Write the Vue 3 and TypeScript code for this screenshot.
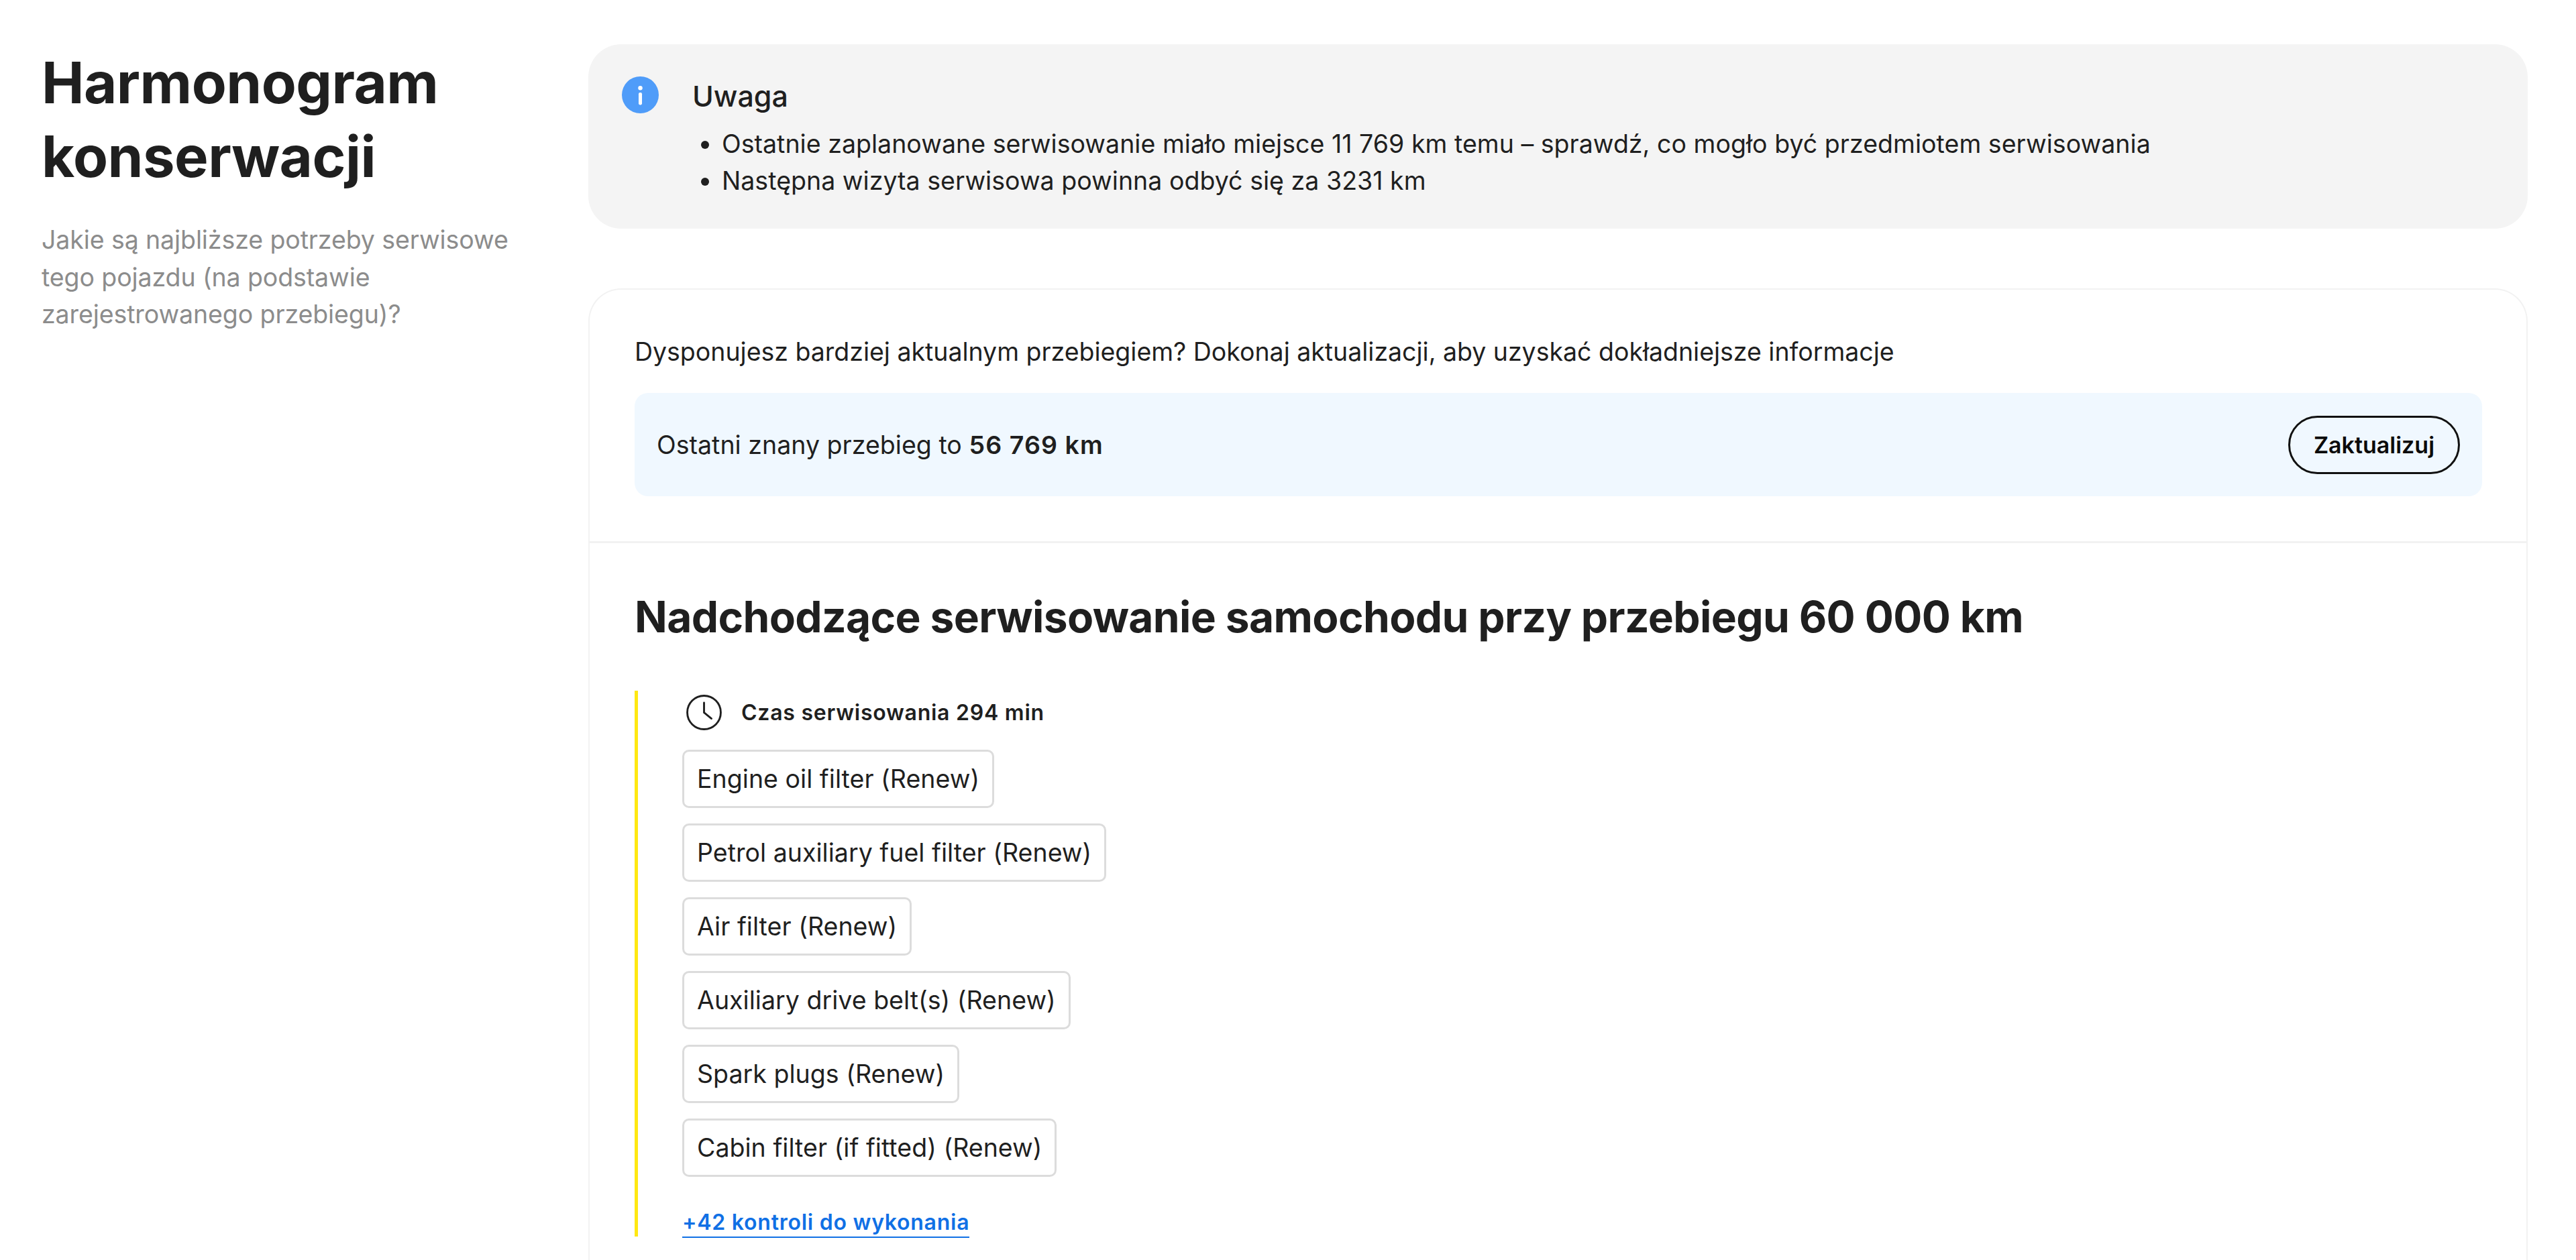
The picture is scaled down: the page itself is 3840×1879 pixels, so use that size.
<template>
  <main class="page">
    <aside class="intro">
      <h1>Harmonogram konserwacji</h1>
      <p>Jakie są najbliższe potrzeby serwisowe tego pojazdu (na podstawie zarejestrowanego przebiegu)?</p>
    </aside>

    <div class="content">
      <section class="notice">
        <svg class="info-icon" viewBox="0 0 24 24" aria-hidden="true">
          <circle cx="12" cy="12" r="12" fill="#4f9cf9" />
          <circle cx="12" cy="7.5" r="1.4" fill="#fff" />
          <rect x="10.9" y="10.5" width="2.2" height="8" rx="0.9" fill="#fff" />
        </svg>
        <div class="notice-body">
          <h2>Uwaga</h2>
          <ul>
            <li v-for="line in notes" :key="line">{{ line }}</li>
          </ul>
        </div>
      </section>

      <section class="card">
        <div class="mileage">
          <p>Dysponujesz bardziej aktualnym przebiegiem? Dokonaj aktualizacji, aby uzyskać dokładniejsze informacje</p>
          <div class="mileage-bar">
            <span>Ostatni znany przebieg to <strong>56 769 km</strong></span>
            <button type="button">Zaktualizuj</button>
          </div>
        </div>

        <div class="upcoming">
          <h2>Nadchodzące serwisowanie samochodu przy przebiegu 60 000 km</h2>
          <div class="service">
            <div class="duration">
              <svg class="clock" viewBox="0 0 24 24" aria-hidden="true">
                <circle cx="12" cy="12" r="11.3" fill="none" stroke="#1f1f1f" stroke-width="1.3" />
                <path d="M12 5.4V12l5 4.1" fill="none" stroke="#1f1f1f" stroke-width="1.3" stroke-linecap="round" />
              </svg>
              <span>Czas serwisowania {{ minutes }} min</span>
            </div>
            <ul class="tasks">
              <li v-for="task in tasks" :key="task">{{ task }}</li>
            </ul>
            <a class="more" href="#">+42 kontroli do wykonania</a>
          </div>
        </div>
      </section>
    </div>
  </main>
</template>

<script setup lang="ts">
const minutes = 294

const notes: string[] = [
  'Ostatnie zaplanowane serwisowanie miało miejsce 11 769 km temu – sprawdź, co mogło być przedmiotem serwisowania',
  'Następna wizyta serwisowa powinna odbyć się za 3231 km',
]

const tasks: string[] = [
  'Engine oil filter (Renew)',
  'Petrol auxiliary fuel filter (Renew)',
  'Air filter (Renew)',
  'Auxiliary drive belt(s) (Renew)',
  'Spark plugs (Renew)',
  'Cabin filter (if fitted) (Renew)',
]
</script>

<style>
html, body { margin: 0; background: #fff; overflow: hidden; }
</style>

<style scoped>
.page {
  display: grid;
  grid-template-columns: 815px 1fr;
  height: 1879px;
  padding: 66px 72px 0 62px;
  box-sizing: border-box;
  overflow: hidden;
  font-family: Inter, "Liberation Sans", sans-serif;
  font-size: 37.5px;
  letter-spacing: 0.03px;
  color: #1f1f1f;
}
.intro h1 {
  margin: 0;
  padding-top: 3px;
  width: 640px;
  font-size: 85px;
  line-height: 110px;
  font-weight: 700;
  letter-spacing: -0.5px;
}
.intro p {
  margin: 41px 0 0;
  width: 720px;
  line-height: 55.5px;
  letter-spacing: -0.1px;
  color: #8c8c8c;
}
.notice {
  display: flex;
  gap: 50px;
  height: 275px;
  box-sizing: border-box;
  padding: 48px 50px;
  background: #f4f4f4;
  border-radius: 49px;
}
.info-icon {
  flex: none;
  width: 55px;
  height: 55px;
}
.notice-body h2 {
  margin: 0;
  font-size: 43px;
  line-height: 58px;
  font-weight: 500;
  letter-spacing: 0;
}
.notice-body ul {
  margin: 15px 0 0;
  padding: 0 0 0 44px;
  line-height: 55px;
}
.card {
  margin-top: 89px;
  border: 2px solid #f2f2f2;
  border-bottom: 0;
  border-radius: 49px 49px 0 0;
  height: 1600px;
}
.mileage {
  padding: 65px 66px 67px 67px;
  border-bottom: 3px solid #f2f2f2;
}
.mileage p {
  margin: 0;
  line-height: 56px;
  letter-spacing: -0.02px;
}
.mileage-bar {
  display: flex;
  align-items: center;
  justify-content: space-between;
  margin-top: 33px;
  height: 154px;
  padding: 0 33px;
  background: #f0f8ff;
  border-radius: 20px;
}
.mileage-bar strong { font-weight: 600; letter-spacing: 1.1px; }
.mileage-bar button {
  width: 256px;
  height: 87px;
  box-sizing: border-box;
  border: 3px solid #111;
  border-radius: 44px;
  background: transparent;
  font: 600 34px Inter, "Liberation Sans", sans-serif;
  color: #0b0b0b;
  padding: 0;
}
.upcoming { padding: 66px 67px 0; }
.upcoming h2 {
  margin: 0;
  font-size: 64px;
  line-height: 88px;
  font-weight: 700;
  letter-spacing: -0.63px;
}
.service {
  margin-top: 66px;
  border-left: 5px solid #ffe812;
  padding: 6px 0 0 66px;
  height: 814px;
  box-sizing: border-box;
}
.duration {
  display: flex;
  align-items: center;
  gap: 29px;
  padding-left: 6px;
  height: 53px;
  font-size: 32px;
  font-weight: 600;
  letter-spacing: 0.75px;
}
.clock { width: 53px; height: 53px; flex: none; }
.tasks {
  display: flex;
  flex-direction: column;
  align-items: flex-start;
  gap: 23px;
  list-style: none;
  margin: 29px 0 0;
  padding: 0;
}
.tasks li {
  height: 87px;
  box-sizing: border-box;
  padding: 0 19px;
  display: flex;
  align-items: center;
  border: 3px solid #dcdcdc;
  border-radius: 10px;
}
.more {
  display: inline-block;
  margin-top: 47px;
  font-size: 32px;
  font-weight: 600;
  letter-spacing: 0.75px;
  line-height: 42px;
  color: #1070e5;
  text-decoration: none;
  border-bottom: 2px solid #1070e5;
}
</style>
